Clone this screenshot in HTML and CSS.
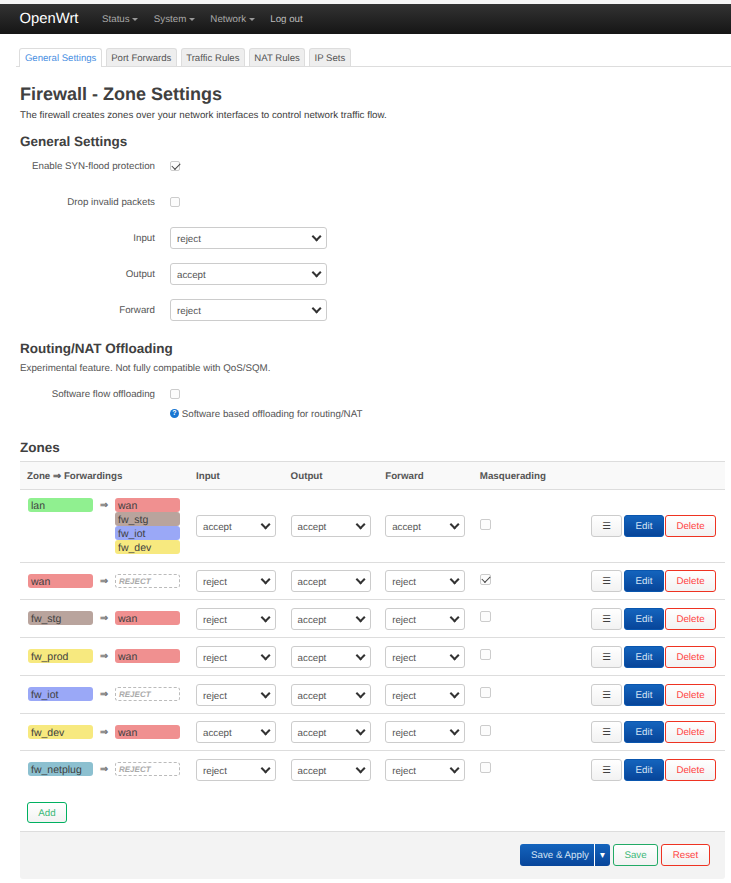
FILE: index.html
```html
<!DOCTYPE html>
<html lang="en">
<head>
<meta charset="utf-8">
<title>Firewall - Zone Settings</title>
<link rel="stylesheet" href="styles.css">
</head>
<body>
<header class="topbar">
  <a class="brand">OpenWrt</a>
  <nav class="menu">
    <a class="menu-item">Status <i class="caret"></i></a>
    <a class="menu-item">System <i class="caret"></i></a>
    <a class="menu-item">Network <i class="caret"></i></a>
    <a class="menu-item">Log out</a>
  </nav>
</header>
<main class="page">
  <ul class="tabs">
    <li class="tab active">General Settings</li>
    <li class="tab">Port Forwards</li>
    <li class="tab">Traffic Rules</li>
    <li class="tab">NAT Rules</li>
    <li class="tab">IP Sets</li>
  </ul>
  <h1>Firewall - Zone Settings</h1>
  <p class="lead">The firewall creates zones over your network interfaces to control network traffic flow.</p>
  <h2>General Settings</h2>
  <div class="form">
    <div class="row"><label>Enable SYN-flood protection</label><span class="cb checked"></span></div>
    <div class="row"><label>Drop invalid packets</label><span class="cb"></span></div>
    <div class="row"><label>Input</label><span class="sel wide">reject</span></div>
    <div class="row"><label>Output</label><span class="sel wide">accept</span></div>
    <div class="row"><label>Forward</label><span class="sel wide">reject</span></div>
  </div>
  <h2 class="h-offload">Routing/NAT Offloading</h2>
  <p class="note">Experimental feature. Not fully compatible with QoS/SQM.</p>
  <div class="form form-offload">
    <div class="row short"><label>Software flow offloading</label><span class="cb"></span></div>
    <div class="help"><span class="q">?</span> Software based offloading for routing/NAT</div>
  </div>
  <h2 class="h-zones">Zones</h2>
  <table class="zones">
    <thead>
      <tr><th class="c-zone">Zone ⇒ Forwardings</th><th class="c-sel">Input</th><th class="c-sel">Output</th><th class="c-sel">Forward</th><th class="c-masq">Masquerading</th><th></th></tr>
    </thead>
    <tbody>
      <tr class="tall">
        <td><div class="fw"><span class="z lan">lan</span><span class="arrow">⇒</span><div class="dest"><span class="z wan">wan</span><span class="z stg">fw_stg</span><span class="z iot">fw_iot</span><span class="z dev">fw_dev</span></div></div></td>
        <td><span class="sel">accept</span></td><td><span class="sel">accept</span></td><td><span class="sel">accept</span></td>
        <td><span class="cb tcb"></span></td>
        <td><div class="acts"><span class="btn more">☰</span><span class="btn edit">Edit</span><span class="btn del">Delete</span></div></td>
      </tr>
      <tr class="short-row">
        <td><div class="fw"><span class="z wan">wan</span><span class="arrow">⇒</span><div class="dest"><span class="z rej">REJECT</span></div></div></td>
        <td><span class="sel">reject</span></td><td><span class="sel">accept</span></td><td><span class="sel">reject</span></td>
        <td><span class="cb tcb checked"></span></td>
        <td><div class="acts"><span class="btn more">☰</span><span class="btn edit">Edit</span><span class="btn del">Delete</span></div></td>
      </tr>
      <tr>
        <td><div class="fw"><span class="z stg">fw_stg</span><span class="arrow">⇒</span><div class="dest"><span class="z wan">wan</span></div></div></td>
        <td><span class="sel">reject</span></td><td><span class="sel">accept</span></td><td><span class="sel">reject</span></td>
        <td><span class="cb tcb"></span></td>
        <td><div class="acts"><span class="btn more">☰</span><span class="btn edit">Edit</span><span class="btn del">Delete</span></div></td>
      </tr>
      <tr>
        <td><div class="fw"><span class="z dev">fw_prod</span><span class="arrow">⇒</span><div class="dest"><span class="z wan">wan</span></div></div></td>
        <td><span class="sel">reject</span></td><td><span class="sel">accept</span></td><td><span class="sel">reject</span></td>
        <td><span class="cb tcb"></span></td>
        <td><div class="acts"><span class="btn more">☰</span><span class="btn edit">Edit</span><span class="btn del">Delete</span></div></td>
      </tr>
      <tr>
        <td><div class="fw"><span class="z iot">fw_iot</span><span class="arrow">⇒</span><div class="dest"><span class="z rej">REJECT</span></div></div></td>
        <td><span class="sel">reject</span></td><td><span class="sel">accept</span></td><td><span class="sel">reject</span></td>
        <td><span class="cb tcb"></span></td>
        <td><div class="acts"><span class="btn more">☰</span><span class="btn edit">Edit</span><span class="btn del">Delete</span></div></td>
      </tr>
      <tr class="short-row">
        <td><div class="fw"><span class="z dev">fw_dev</span><span class="arrow">⇒</span><div class="dest"><span class="z wan">wan</span></div></div></td>
        <td><span class="sel">accept</span></td><td><span class="sel">accept</span></td><td><span class="sel">reject</span></td>
        <td><span class="cb tcb"></span></td>
        <td><div class="acts"><span class="btn more">☰</span><span class="btn edit">Edit</span><span class="btn del">Delete</span></div></td>
      </tr>
      <tr>
        <td><div class="fw"><span class="z net">fw_netplug</span><span class="arrow">⇒</span><div class="dest"><span class="z rej">REJECT</span></div></div></td>
        <td><span class="sel">reject</span></td><td><span class="sel">accept</span></td><td><span class="sel">reject</span></td>
        <td><span class="cb tcb"></span></td>
        <td><div class="acts"><span class="btn more">☰</span><span class="btn edit">Edit</span><span class="btn del">Delete</span></div></td>
      </tr>
    </tbody>
  </table>
  <div class="add-wrap"><span class="btn add">Add</span></div>
  <footer class="actions">
    <span class="split"><span class="split-main">Save &amp; Apply</span><span class="split-arrow">▾</span></span>
    <span class="btn save">Save</span>
    <span class="btn reset">Reset</span>
  </footer>
</main>
</body>
</html>
```
FILE: styles.css
```css
* { box-sizing: border-box; }
html, body { margin: 0; padding: 0; }
body {
  background: #fff;
  color: #404040;
  font-family: "Liberation Sans", Arial, sans-serif;
  font-size: 9.75px;
  line-height: 14px;
  padding-top: 4px;
  height: 883px;
  overflow: hidden;
  text-rendering: geometricPrecision;
}
body::before { content: ""; position: absolute; top: 0; left: 0; right: 0; height: 4px; background: #f6f6f6; }
.topbar {
  height: 30px;
  background: linear-gradient(#333, #151515);
  display: flex;
  align-items: center;
  padding-left: 19.5px;
}
.brand { color: #fff; font-size: 14.8px; width: 82.5px; }
.menu { display: flex; gap: 15.4px; padding-top: 2px; }
.menu-item { color: #a8a8a8; font-size: 9.75px; }
.menu-item:last-child { color: #bbb; }
.caret {
  display: inline-block;
  width: 0;
  height: 0;
  border-top: 3px solid #999;
  border-left: 3px solid transparent;
  border-right: 3px solid transparent;
  vertical-align: middle;
}
.page { padding: 14px 6px 0 20px; }
.tabs {
  list-style: none;
  margin: 0 -6px 0 -4px;
  padding: 0 0 0 3.3px;
  display: flex;
  gap: 3.6px;
  height: 19px;
  border-bottom: 1px solid #ddd;
}
.tab {
  height: 18px;
  padding: 3px 4.6px 0;
  border: 1px solid #ddd;
  border-bottom: 0;
  border-radius: 3px 3px 0 0;
  background: #eee;
  color: #555;
  font-size: 9.6px;
  white-space: nowrap;
}
.tab.active {
  height: 19px;
  background: #fff;
  color: #4a90e2;
}
h1 { margin: 14px 0 0; font-size: 18px; line-height: 26px; color: #404040; font-weight: bold; }
.lead { margin: 2px 0 0; }
h2 { margin: 12px 0 0; font-size: 13.5px; line-height: 14px; font-weight: bold; color: #404040; }
.form { margin-top: -1px; }
.row { display: flex; align-items: center; height: 36px; }
.row label { width: 135px; text-align: right; margin-right: 15px; padding-top: 2px; color: #555; }
.row.short { height: 24px; }
.cb {
  display: inline-block;
  width: 10px;
  height: 10px;
  border: 1px solid #ccc;
  border-radius: 2px;
  background: #fcfcfc;
  position: relative;
}
.cb.tcb { width: 11px; height: 11px; margin-bottom: 3px; vertical-align: middle; }
.cb.checked::after {
  content: "";
  position: absolute;
  left: 0.8px;
  top: 0.8px;
  width: 6.5px;
  height: 3.8px;
  border-left: 1.7px solid #444;
  border-bottom: 1.7px solid #444;
  transform: rotate(-45deg);
}
.sel {
  display: block;
  position: relative;
  width: 80px;
  height: 22px;
  line-height: 23px;
  padding-left: 6px;
  border: 1px solid #ccc;
  border-radius: 3px;
  background: #fff;
  color: #555;
}
.sel.wide { width: 157px; }
.sel::after {
  content: "";
  position: absolute;
  right: 5.8px;
  top: 5.2px;
  width: 5.2px;
  height: 5.2px;
  border-right: 2px solid #333;
  border-bottom: 2px solid #333;
  transform: rotate(45deg);
}
.h-offload { margin-top: 14px; }
.note { margin: 6px 0 0; color: #555; }
.form-offload { margin-top: 6px; }
.help { margin-left: 150px; color: #555; line-height: 14px; margin-top: 2px; }
.q {
  display: inline-block;
  width: 9px;
  height: 9px;
  line-height: 9px;
  border-radius: 50%;
  background: #1976d2;
  color: #fff;
  font-size: 7px;
  font-weight: bold;
  text-align: center;
  vertical-align: 2px;
}
.h-zones { margin-top: 19px; }
.zones {
  width: 705px;
  margin-top: 6px;
  border-collapse: collapse;
  table-layout: fixed;
}
.zones th {
  background: #f9f9f9;
  height: 28px;
  border-top: 1px solid #ddd;
  border-bottom: 1px solid #ddd;
  text-align: left;
  padding: 2px 7px 0;
  color: #555;
  font-size: 9.75px;
}
.zones th.c-zone { width: 169px; }
.zones th.c-sel { width: 94.6px; }
.zones th.c-masq { width: 104px; }
.zones td { height: 38px; border-bottom: 1px solid #ddd; padding: 0 7px; vertical-align: middle; }
.zones tr:last-child td { border-bottom: 0; }
.zones tr.tall td { height: 73px; }
.zones tr.short-row td { height: 37px; }
.fw { display: flex; align-items: flex-start; padding-left: 1px; }
.arrow { width: 22px; text-align: center; color: #777; font-weight: bold; line-height: 15px; }
.dest { display: flex; flex-direction: column; }
.z {
  display: block;
  width: 65px;
  height: 14px;
  line-height: 17px;
  padding-left: 3px;
  border-radius: 3px;
  font-size: 10.5px;
  color: #404040;
  white-space: nowrap;
}
.lan { background: #90f090; }
.wan { background: #f09090; }
.stg { background: #b9a49d; }
.iot { background: #9aa8f7; }
.dev { background: #f7e97f; }
.net { background: #8cc0d0; }
.rej {
  border: 1px dashed #bbb;
  background: #fff;
  color: #aaa;
  font-style: italic;
  font-weight: bold;
  font-size: 8px;
  line-height: 13px;
}
.acts { display: flex; justify-content: flex-end; gap: 2px; margin-right: 2px; }
.btn {
  display: inline-block;
  height: 22px;
  line-height: 22px;
  text-align: center;
  border: 1px solid #ccc;
  border-radius: 3px;
  background: linear-gradient(#fff, #f2f2f2);
  color: #404040;
  font-size: 9.75px;
}
.more { width: 31px; }
.edit { width: 40px; color: #d4e4f5; background: linear-gradient(#1464bd, #07459a); border-color: #0a56ae; }
.del { width: 51px; margin-left: -1px; color: #f44; border-color: #ee3322; }
.add-wrap { padding: 13px 7px 0; }
.add { width: 40px; height: 21px; color: #3cb878; border-color: #00b060; }
.actions {
  margin-top: 8px;
  height: 48px;
  background: #f3f3f3;
  border-top: 1px solid #ddd;
  border-radius: 0 0 3px 3px;
  display: flex;
  justify-content: flex-end;
  align-items: flex-start;
  gap: 3px;
  padding: 12px 15px 0 0;
}
.split { display: flex; height: 22px; border-radius: 3px; overflow: hidden; color: #d4e4f5; background: linear-gradient(#1464bd, #07459a); line-height: 23px; }
.split-main { width: 74px; padding-left: 11px; white-space: nowrap; }
.split-arrow { width: 16px; text-align: center; border-left: 1px solid #fff; color: #fff; }
.save { width: 45px; color: #3cb878; border-color: #22aa66; }
.reset { width: 49px; color: #f44; border-color: #ee3322; }
```
